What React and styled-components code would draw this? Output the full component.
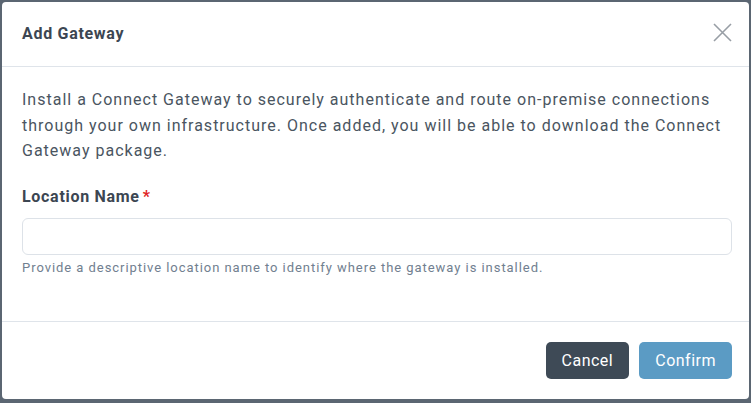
import styled, { createGlobalStyle } from "styled-components";

const GlobalStyle = createGlobalStyle`
  html, body {
    margin: 0;
    padding: 0;
    background-color: #5b6672;
    font-family: Roboto, "Liberation Sans", Arial, sans-serif;
  }
  * {
    box-sizing: border-box;
  }
`;

const Backdrop = styled.div`
  min-height: 100vh;
  padding: 2px;
`;

const Modal = styled.div`
  width: 747px;
  height: 397px;
  background-color: #ffffff;
  border-radius: 4px;
  display: flex;
  flex-direction: column;
`;

const Header = styled.div`
  display: flex;
  justify-content: space-between;
  align-items: center;
  height: 65px;
  padding: 0 17px 2px 20px;
  border-bottom: 1px solid #dfe4ea;
`;

const Title = styled.h2`
  margin: 0;
  font-size: 16px;
  font-weight: 700;
  letter-spacing: 0.7px;
  color: #3c4652;
`;

const CloseButton = styled.button`
  border: none;
  background: none;
  padding: 0;
  width: 19px;
  height: 19px;
  margin-top: -2px;
  display: flex;
  cursor: pointer;
`;

const Body = styled.div`
  flex: 1;
  padding: 20px 17px 0 20px;
`;

const Intro = styled.p`
  margin: 0 0 21px;
  font-size: 16px;
  line-height: 25.6px;
  letter-spacing: 1px;
  color: #4a5561;
`;

const Label = styled.label`
  display: block;
  font-size: 16px;
  font-weight: 700;
  line-height: 24px;
  letter-spacing: 0.7px;
  color: #3c4652;
  margin-bottom: 9px;
`;

const Required = styled.span`
  color: #e02424;
  margin-left: 3px;
`;

const Input = styled.input`
  display: block;
  width: 100%;
  height: 37px;
  border: 1px solid #dde2e8;
  border-radius: 6px;
  padding: 0 12px;
  font-size: 16px;
  font-family: inherit;
  outline: none;
`;

const Help = styled.div`
  margin-top: 4px;
  font-size: 13px;
  line-height: 18px;
  letter-spacing: 0.95px;
  color: #718090;
`;

const Footer = styled.div`
  display: flex;
  justify-content: flex-end;
  gap: 10px;
  padding: 20px 17px 20px 20px;
  border-top: 1px solid #dfe4ea;
`;

const Button = styled.button`
  height: 37px;
  padding: 0 16px;
  border: none;
  border-radius: 5px;
  font-family: inherit;
  font-size: 16px;
  letter-spacing: 0.5px;
  color: #ffffff;
  background-color: ${(p) => (p.$primary ? "#5b9bc4" : "#3e4a56")};
  cursor: ${(p) => (p.disabled ? "default" : "pointer")};
`;

function CloseIcon() {
  return (
    <svg width="19" height="19" viewBox="0 0 19 19">
      <path d="M1 1 L18 18 M18 1 L1 18" stroke="#989ea5" strokeWidth="1.6" fill="none" />
    </svg>
  );
}

export default function App() {
  return (
    <>
      <GlobalStyle />
      <Backdrop>
        <Modal>
          <Header>
            <Title>Add Gateway</Title>
            <CloseButton aria-label="Close">
              <CloseIcon />
            </CloseButton>
          </Header>
          <Body>
            <Intro>
              Install a Connect Gateway to securely authenticate and route on-premise connections
              through your own infrastructure. Once added, you will be able to download the Connect
              Gateway package.
            </Intro>
            <Label htmlFor="location">
              Location Name<Required>*</Required>
            </Label>
            <Input id="location" type="text" />
            <Help>Provide a descriptive location name to identify where the gateway is installed.</Help>
          </Body>
          <Footer>
            <Button>Cancel</Button>
            <Button $primary disabled>
              Confirm
            </Button>
          </Footer>
        </Modal>
      </Backdrop>
    </>
  );
}
